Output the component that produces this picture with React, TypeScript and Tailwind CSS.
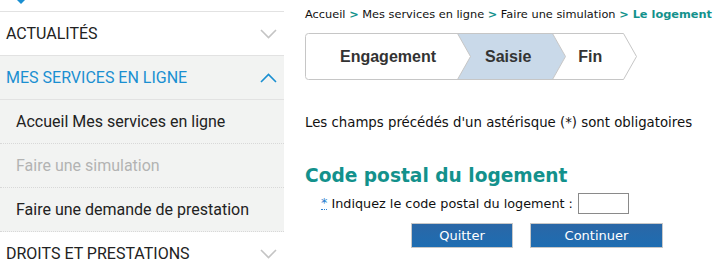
import React from 'react';

const roboto = { fontFamily: 'Roboto, "Liberation Sans", sans-serif' };

function Chevron({ up, color }: { up?: boolean; color: string }) {
    return (
        <svg width="17" height="10" viewBox="0 0 17 10" className="shrink-0">
            <polyline
                points={up ? '1,9 8.5,1.5 16,9' : '1,1 8.5,8.5 16,1'}
                fill="none"
                stroke={color}
                strokeWidth="1.6"
            />
        </svg>
    );
}

function MenuRow({ label, open, first }: { label: string; open?: boolean; first?: boolean }) {
    return (
        <div
            className={`flex items-center justify-between pl-[6px] pr-[7px] border-b border-[#e2e2e2] ${first ? 'h-[45px] border-t' : 'h-[44px]'} ${open ? 'bg-[#f2f3f2] text-[#1a8fd1]' : 'bg-white text-[#222]'}`}
        >
            <span className="text-[16px]">{label}</span>
            <Chevron up={open} color={open ? '#1a8fd1' : '#c4c4c4'} />
        </div>
    );
}

function SubRow({ label, disabled }: { label: string; disabled?: boolean }) {
    return (
        <div className="flex items-center h-[44px] pl-[16px] bg-[#f2f3f2] border-b border-dotted border-[#d8d8d8]">
            <span className={`text-[16px] ${disabled ? 'text-[#b3b3b3]' : 'text-[#222]'}`}>{label}</span>
        </div>
    );
}

function Steps() {
    return (
        <div className="grid w-[333px] h-[47px]">
            <svg width="333" height="47" viewBox="0 0 333 47" className="col-start-1 row-start-1">
                <path d="M3.5,0.5 H152.5 L165.5,23.5 L152.5,46.5 H3.5 Q0.5,46.5 0.5,43.5 V3.5 Q0.5,0.5 3.5,0.5 Z" fill="#fff" />
                <path d="M152.5,0.5 H247.5 L260.5,23.5 L247.5,46.5 H152.5 L165.5,23.5 Z" fill="#c9d9e9" />
                <path d="M247.5,0.5 H318.5 L331.5,23.5 L318.5,46.5 H247.5 L260.5,23.5 Z" fill="#fff" />
                <path
                    d="M318.5,0.5 H3.5 Q0.5,0.5 0.5,3.5 V43.5 Q0.5,46.5 3.5,46.5 H318.5 L331.5,23.5 Z M152.5,0.5 L165.5,23.5 L152.5,46.5 M247.5,0.5 L260.5,23.5 L247.5,46.5"
                    fill="none"
                    stroke="#c6c6c6"
                    strokeWidth="1"
                />
            </svg>
            <div className="col-start-1 row-start-1 flex items-center text-[16px] font-bold text-[#333]" style={{ fontFamily: '"Liberation Sans", Arial, sans-serif' }}>
                <span className="ml-[35px]">Engagement</span>
                <span className="ml-[49px]">Saisie</span>
                <span className="ml-[47px]">Fin</span>
            </div>
        </div>
    );
}

export default function App() {
    return (
        <div className="flex w-[720px] h-[275px] bg-white overflow-hidden">
            {/* Menu latéral */}
            <div className="w-[284px] shrink-0" style={roboto}>
                <div className="h-[11px] pl-[17px]">
                    <div className="w-0 h-0 border-l-[4px] border-r-[4px] border-t-[4px] border-l-transparent border-r-transparent border-t-[#1a8fd1]" />
                </div>
                <MenuRow label="ACTUALITÉS" first />
                <MenuRow label="MES SERVICES EN LIGNE" open />
                <SubRow label="Accueil Mes services en ligne" />
                <SubRow label="Faire une simulation" disabled />
                <SubRow label="Faire une demande de prestation" />
                <MenuRow label="DROITS ET PRESTATIONS" />
            </div>

            {/* Contenu */}
            <div className="flex-1 pl-[21px] text-[#111]" style={{ fontFamily: '"DejaVu Sans", Verdana, sans-serif' }}>
                <div className="mt-[7px] text-[11.35px] leading-[14px] whitespace-nowrap">
                    Accueil <span className="text-[#13918c] font-bold">&gt;</span> Mes services en ligne{' '}
                    <span className="text-[#13918c] font-bold">&gt;</span> Faire une simulation{' '}
                    <span className="text-[#13918c] font-bold">&gt; Le logement</span>
                </div>

                <div className="mt-[12px]">
                    <Steps />
                </div>

                <p className="mt-[35px] text-[13.3px] leading-[16px] whitespace-nowrap">
                    Les champs précédés d'un astérisque (*) sont obligatoires
                </p>

                <h2 className="mt-[34px] text-[18.6px] leading-[22px] font-bold text-[#13918c] whitespace-nowrap">
                    Code postal du logement
                </h2>

                <div className="flex items-center mt-[6px] pl-[16px] text-[12.8px] whitespace-nowrap">
                    <span className="text-[#2a7fd0] border-b border-dotted border-[#2a7fd0] leading-[12px]">*</span>
                    <span className="ml-[4px]">Indiquez le code postal du logement :</span>
                    <input type="text" className="ml-[5px] w-[51px] h-[21px] border border-[#8a8a8a] bg-white" />
                </div>

                <div className="flex mt-[9px] pl-[106px] gap-[17px] text-[13px] text-white">
                    <button className="w-[102px] h-[25px] border border-[#c8c8c8] bg-gradient-to-b from-[#2a67a6] to-[#1d6db2]">
                        Quitter
                    </button>
                    <button className="w-[133px] h-[25px] border border-[#c8c8c8] bg-gradient-to-b from-[#2a67a6] to-[#1d6db2]">
                        Continuer
                    </button>
                </div>
            </div>
        </div>
    );
}
